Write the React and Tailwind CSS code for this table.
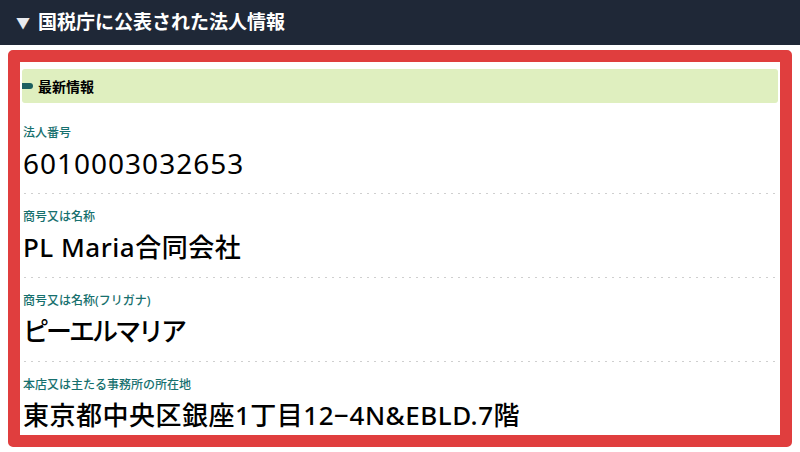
import React from 'react'

const rows = [
    { label: '法人番号', value: '6010003032653', cls: 'text-[28px] tracking-[1px] font-normal' },
    { label: '商号又は名称', value: 'PL Maria合同会社', cls: 'text-[26px] tracking-[0.5px] font-medium' },
    { label: '商号又は名称(フリガナ)', value: 'ピーエルマリア', cls: 'text-[26px] tracking-[-3px] font-medium' },
    { label: '本店又は主たる事務所の所在地', value: '東京都中央区銀座1丁目12−4N&EBLD.7階', cls: 'text-[26px] tracking-[0.5px] font-medium' },
]

function InfoRow({ label, value, cls, last }) {
    return (
        <div>
            <div className="pt-[15px] pb-[12px] px-[1px]">
                <p className="text-[12px] leading-[16px] font-medium text-[#17706e]">{label}</p>
                <p className={'mt-[4px] leading-[36px] text-black ' + cls}>{value}</p>
            </div>
            {!last && (
                <div className="h-px mx-[2px] bg-[linear-gradient(to_right,#cfcfcf_2px,transparent_2px)] bg-[length:7px_1px]" />
            )}
        </div>
    )
}

export default function App() {
    return (
        <div className="w-[800px] h-[452px] bg-white overflow-hidden font-['Noto_Sans','Noto_Sans_CJK_JP',sans-serif]">
            {/* header */}
            <div className="h-[45px] bg-[#1f2837] flex items-center px-[16px] gap-[8px] text-white">
                <span className="text-[14px] text-[#e8eaee]">▼</span>
                <h2 className="text-[19px] font-bold">国税庁に公表された法人情報</h2>
            </div>

            {/* box */}
            <div className="mt-[5px] mx-[8px] h-[397px] border-[12px] border-[#e03e3e] rounded-[5px] overflow-hidden">
                <div className="pt-[7px] px-[2px]">
                    <div className="h-[34px] mb-[7px] bg-[#dfefbf] rounded-[3px] flex items-center gap-[5px]">
                        <span className="w-[11px] h-[6px] bg-[#1c5f5f] rounded-r-full" />
                        <span className="text-[14px] font-bold text-black">最新情報</span>
                    </div>
                    {rows.map((r, i) => (
                        <InfoRow key={i} {...r} last={i === rows.length - 1} />
                    ))}
                </div>
            </div>
        </div>
    )
}
